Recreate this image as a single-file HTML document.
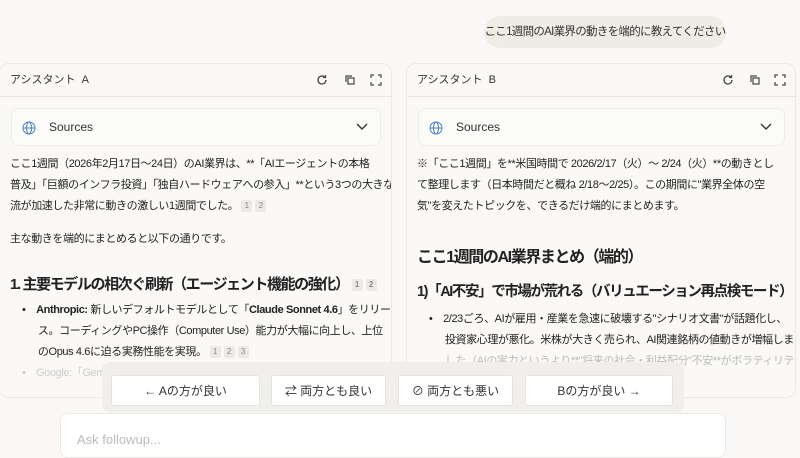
<!DOCTYPE html>
<html><head><meta charset="utf-8"><style>
*{margin:0;padding:0;box-sizing:border-box}
body{width:800px;height:450px;overflow:hidden;background:#f9f8f6;font-family:"Liberation Sans","Noto Sans CJK JP",sans-serif;color:#222;position:relative}
.bub{position:absolute;left:484px;top:16px;width:242px;height:32px;border-radius:16px;background:#efece6;font-size:11.5px;letter-spacing:-0.7px;line-height:32px;text-align:center;color:#333;white-space:nowrap}
.pan{position:absolute;top:63px;height:335px;background:#faf9f7;border:1px solid #ebe9e5;border-radius:10px;overflow:hidden}
.hd{height:33px;border-bottom:1px solid #e8e6e2;font-size:11px;line-height:32px;padding-left:10px;color:#333;position:relative}
.ic{position:absolute;top:10px}
.src{position:absolute;left:11px;top:44px;height:38px;background:#fbfbfa;border:1px solid #eeece9;border-radius:8px;font-size:12px;line-height:37px;padding-left:37px;color:#333}
.tx{position:absolute;left:10px;font-size:11px;letter-spacing:-0.4px;color:#222;white-space:nowrap}
.h{letter-spacing:-1.4px}
.c{display:inline-block;background:#eceae7;color:#888;font-size:8px;width:11px;height:12px;line-height:12px;text-align:center;margin-left:3px;border-radius:2px;vertical-align:middle;letter-spacing:0}
.bar{position:absolute;left:102px;top:362px;width:582px;height:50px;background:#f0efec;border-radius:8px}
.btn{position:absolute;top:13px;height:31px;background:#fff;border:1px solid #e6e4e0;border-radius:3px;font-size:12px;line-height:30px;text-align:center;color:#333}
.inp{position:absolute;left:60px;top:413px;width:666px;height:45px;background:#fff;border:1px solid #ebe9e5;border-radius:8px;font-size:13px;color:#bbb;padding:18px 0 0 16px}
</style></head><body>
<div class="bub">ここ1週間のAI業界の動きを端的に教えてください</div>

<div class="pan" style="left:-1px;width:393px">
<div class="hd">アシスタント&nbsp; A
<svg class="ic" style="left:316px" width="12" height="12" viewBox="0 0 12 12" fill="none" stroke="#444" stroke-width="1.3"><path d="M10 6a4 4 0 1 1-1.2-2.9"/><path d="M9.5 1v2.5H7"/></svg>
<svg class="ic" style="left:344px" width="12" height="12" viewBox="0 0 12 12" fill="none" stroke="#444" stroke-width="1.2"><rect x="4" y="4" width="6" height="6"/><path d="M2 8V2h6"/></svg>
<svg class="ic" style="left:370px" width="12" height="12" viewBox="0 0 12 12" fill="none" stroke="#444" stroke-width="1.2"><path d="M1 4V1h3M8 1h3v3M11 8v3H8M4 11H1V8"/></svg>
</div>
<div class="src" style="width:370px">Sources
<svg style="position:absolute;left:10px;top:12px" width="14" height="14" viewBox="0 0 14 14" fill="none" stroke="#4a7fb5" stroke-width="1"><circle cx="7" cy="7" r="6"/><ellipse cx="7" cy="7" rx="2.5" ry="6"/><path d="M1 7h12"/></svg>
<svg style="position:absolute;right:12px;top:14px" width="12" height="8" viewBox="0 0 12 8" fill="none" stroke="#333" stroke-width="1.4"><path d="M1 1l5 5 5-5"/></svg></div>
<div class="tx" style="top:90px;line-height:21px">ここ1週間（2026年2月17日〜24日）のAI業界は、**「AIエージェントの本格<br>普及」「巨額のインフラ投資」「独自ハードウェアへの参入」**という3つの大きな潮<br>流が加速した非常に動きの激しい1週間でした。<span class="c">1</span><span class="c">2</span></div>
<div class="tx" style="top:166px">主な動きを端的にまとめると以下の通りです。</div>
<div class="tx h" style="top:209px;font-size:15px;font-weight:bold">1. 主要モデルの相次ぐ刷新（エージェント機能の強化）<span class="c">1</span><span class="c">2</span></div>
<div class="tx" style="top:236px;left:22px;line-height:21px">•&nbsp;&nbsp;&nbsp; <b>Anthropic:</b> 新しいデフォルトモデルとして「<b>Claude Sonnet 4.6</b>」をリリー<br>&nbsp;&nbsp;&nbsp;&nbsp;&nbsp; ス。コーディングやPC操作（Computer Use）能力が大幅に向上し、上位<br>&nbsp;&nbsp;&nbsp;&nbsp;&nbsp; のOpus 4.6に迫る実務性能を実現。<span class="c">1</span><span class="c">2</span><span class="c">3</span><br><span style="color:#ccc">•&nbsp;&nbsp;&nbsp; Google:「Gemini</span></div>
</div>

<div class="pan" style="left:406px;width:390px">
<div class="hd">アシスタント&nbsp; B
<svg class="ic" style="left:315px" width="12" height="12" viewBox="0 0 12 12" fill="none" stroke="#444" stroke-width="1.3"><path d="M10 6a4 4 0 1 1-1.2-2.9"/><path d="M9.5 1v2.5H7"/></svg>
<svg class="ic" style="left:342px" width="12" height="12" viewBox="0 0 12 12" fill="none" stroke="#444" stroke-width="1.2"><rect x="4" y="4" width="6" height="6"/><path d="M2 8V2h6"/></svg>
<svg class="ic" style="left:367px" width="12" height="12" viewBox="0 0 12 12" fill="none" stroke="#444" stroke-width="1.2"><path d="M1 4V1h3M8 1h3v3M11 8v3H8M4 11H1V8"/></svg>
</div>
<div class="src" style="width:367px">Sources
<svg style="position:absolute;left:10px;top:12px" width="14" height="14" viewBox="0 0 14 14" fill="none" stroke="#4a7fb5" stroke-width="1"><circle cx="7" cy="7" r="6"/><ellipse cx="7" cy="7" rx="2.5" ry="6"/><path d="M1 7h12"/></svg>
<svg style="position:absolute;right:12px;top:14px" width="12" height="8" viewBox="0 0 12 8" fill="none" stroke="#333" stroke-width="1.4"><path d="M1 1l5 5 5-5"/></svg></div>
<div class="tx" style="top:90px;line-height:21px">※「ここ1週間」を**米国時間で 2026/2/17（火）〜 2/24（火）**の動きとし<br>て整理します（日本時間だと概ね 2/18〜2/25）。この期間に"業界全体の空<br>気"を変えたトピックを、できるだけ端的にまとめます。</div>
<div class="tx h" style="top:179px;font-size:16px;font-weight:bold">ここ1週間のAI業界まとめ（端的）</div>
<div class="tx h" style="top:216px;font-size:14.5px;font-weight:bold">1)「AI不安」で市場が荒れる（バリュエーション再点検モード）</div>
<div class="tx" style="top:245px;left:22px;line-height:21px">•&nbsp;&nbsp;&nbsp; 2/23ごろ、AIが雇用・産業を急速に破壊する"シナリオ文書"が話題化し、<br>&nbsp;&nbsp;&nbsp;&nbsp;&nbsp; 投資家心理が悪化。米株が大きく売られ、AI関連銘柄の値動きが増幅しま<br><span style="color:#bbb">&nbsp;&nbsp;&nbsp;&nbsp;&nbsp; した（AIの実力というより**"将来の社会・利益配分"不安**がボラティリテ</span></div>
</div>

<div class="bar">
<div class="btn" style="left:9px;width:149px">← Aの方が良い</div>
<div class="btn" style="left:169px;width:115px">⇄ 両方とも良い</div>
<div class="btn" style="left:296px;width:115px">⊘ 両方とも悪い</div>
<div class="btn" style="left:423px;width:148px">Bの方が良い →</div>
</div>
<div class="inp">Ask followup...</div>
</body></html>
